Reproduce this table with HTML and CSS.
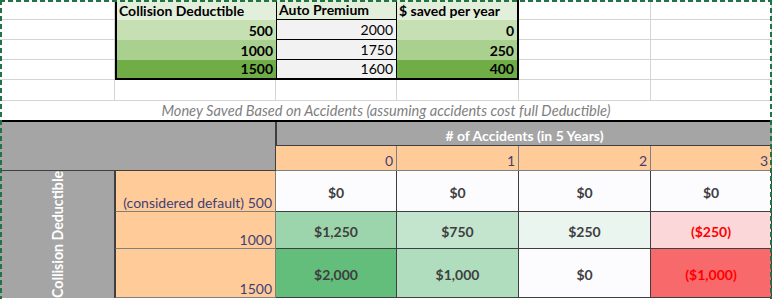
FILE: index.html
```html
<!DOCTYPE html>
<html>
<head>
<meta charset="utf-8">
<link rel="stylesheet" href="styles.css">
</head>
<body>
<div class="sheet">
  <div class="grid">
    <!-- row 1 -->
    <div class="c g"></div>
    <div class="c tb hd b-left">Collision Deductible</div>
    <div class="c tb hd mid">Auto Premium</div>
    <div class="c tb hd b-right">$ saved per year</div>
    <div class="c g"></div>
    <div class="c g"></div>
    <!-- row 2 -->
    <div class="c g"></div>
    <div class="c tb num bold g1 b-left">500</div>
    <div class="c tb num mid gray">2000</div>
    <div class="c tb num bold g1 b-right">0</div>
    <div class="c g"></div>
    <div class="c g"></div>
    <!-- row 3 -->
    <div class="c g"></div>
    <div class="c tb num bold g2 b-left">1000</div>
    <div class="c tb num mid gray">1750</div>
    <div class="c tb num bold g2 b-right">250</div>
    <div class="c g"></div>
    <div class="c g"></div>
    <!-- row 4 -->
    <div class="c g"></div>
    <div class="c tb num bold g3 b-left b-bot">1500</div>
    <div class="c tb num mid gray b-bot">1600</div>
    <div class="c tb num bold g3 b-right b-bot">400</div>
    <div class="c g"></div>
    <div class="c g"></div>
    <!-- row 5 -->
    <div class="c g"></div>
    <div class="c g"></div>
    <div class="c g"></div>
    <div class="c g"></div>
    <div class="c g"></div>
    <div class="c g"></div>
    <!-- row 6 caption -->
    <div class="c caption">Money Saved Based on Accidents (assuming accidents cost full Deductible)</div>
    <!-- rows 7-8 -->
    <div class="c corner"></div>
    <div class="c head">#&nbsp;of Accidents (in 5 Years)</div>
    <div class="c inp num">0</div>
    <div class="c inp num">1</div>
    <div class="c inp num">2</div>
    <div class="c inp num">3</div>
    <!-- rows 9-11 -->
    <div class="c side"><span class="vert">Collision Deductible</span></div>
    <div class="c inp lbl">(considered default) 500</div>
    <div class="c out" style="background:#fcfcff">$0</div>
    <div class="c out" style="background:#fcfcff">$0</div>
    <div class="c out" style="background:#fcfcff">$0</div>
    <div class="c out" style="background:#fcfcff">$0</div>

    <div class="c inp lbl">1000</div>
    <div class="c out" style="background:#9cd5ac">$1,250</div>
    <div class="c out" style="background:#c3e5cd">$750</div>
    <div class="c out" style="background:#e9f5ee">$250</div>
    <div class="c out neg" style="background:#fbd7da">($250)</div>

    <div class="c inp lbl">1500</div>
    <div class="c out" style="background:#63be7b">$2,000</div>
    <div class="c out" style="background:#b0ddbd">$1,000</div>
    <div class="c out" style="background:#fcfcff">$0</div>
    <div class="c out neg" style="background:#f8696b">($1,000)</div>
  </div>
  <div class="marquee"></div>
</div>
</body>
</html>
```

FILE: styles.css
```css
html, body {
  margin: 0;
  padding: 0;
  background: #ffffff;
}
body {
  font-family: "Lato", "Open Sans", sans-serif;
  font-size: 14px;
  color: #000;
  width: 772px;
  height: 299px;
  overflow: hidden;
}
.sheet {
  position: relative;
  width: 772px;
  height: 299px;
  overflow: hidden;
}
.grid {
  display: grid;
  grid-template-columns: 115px 161px 121px 122px 132px 121px;
  grid-template-rows: 20px 20px 20px 20px 21px 21px 24px 25px 41px 37px 49px;
}
.c {
  box-sizing: border-box;
  display: flex;
  align-items: flex-end;
  padding: 0 3px 1px 3px;
  white-space: nowrap;
  overflow: hidden;
  line-height: 17px;
}
.g {
  border-right: 1px solid #d4d4d4;
  border-bottom: 1px solid #d4d4d4;
}
.hd {
  background: #e2efda;
  font-weight: 700;
  padding-left: 2px;
}
.num { justify-content: flex-end; }
.bold { font-weight: 700; }
.g1 { background: #c6e0b4; }
.g2 { background: #a9d08e; }
.g3 { background: #70ad47; }
.gray { background: #f2f2f2; }
.mid {
  border-left: 1px solid #000;
  border-right: 1px solid #000;
  border-bottom: 1px solid #000;
}
.b-left { border-left: 2px solid #000; }
.b-right { border-right: 2px solid #000; }
.b-bot { border-bottom: 2px solid #000; }

.caption {
  grid-column: 1 / span 6;
  justify-content: center;
  font-style: italic;
  font-size: 14.6px;
  color: #7f7f7f;
  border-bottom: 2px solid #000;
  padding-bottom: 1px;
}
.corner {
  grid-column: 1 / span 2;
  grid-row: span 2;
  background: #a5a5a5;
  border-right: 1px solid #3f3f3f;
  border-bottom: 1px solid #3f3f3f;
}
.head {
  grid-column: 3 / span 4;
  background: #a5a5a5;
  color: #ffffff;
  font-weight: 700;
  justify-content: center;
  border-left: 1px solid #3f3f3f;
  border-bottom: 1px solid #3f3f3f;
  padding-bottom: 1px;
}
.inp {
  background: #ffcc99;
  color: #3f3f76;
  border-right: 1px solid #7f7f7f;
  border-bottom: 1px solid #7f7f7f;
}
.lbl {
  justify-content: flex-end;
  border-left: 1px solid #3f3f3f;
  padding-bottom: 0;
}
.side {
  grid-row: span 3;
  background: #a5a5a5;
  border-right: 1px solid #3f3f3f;
  align-items: center;
  justify-content: center;
  padding: 0;
}
.vert {
  writing-mode: vertical-rl;
  transform: rotate(180deg);
  color: #ffffff;
  font-weight: 700;
  font-size: 14.2px;
  line-height: 17px;
}
.out {
  justify-content: center;
  align-items: center;
  font-weight: 700;
  color: #3f3f3f;
  border-right: 1px solid #3f3f3f;
  border-bottom: 1px solid #3f3f3f;
  padding: 2px 2px 0 2px;
}
.out.neg { color: #ff0000; }

.marquee {
  position: absolute;
  inset: 0;
  pointer-events: none;
  background:
    repeating-linear-gradient(90deg, #217346 0 5px, transparent 5px 8px) top left / 100% 2px no-repeat,
    repeating-linear-gradient(180deg, #217346 0 5px, transparent 5px 8px) top left / 2px 100% no-repeat,
    repeating-linear-gradient(180deg, #217346 0 5px, transparent 5px 8px) top right / 2px 100% no-repeat;
}
```
